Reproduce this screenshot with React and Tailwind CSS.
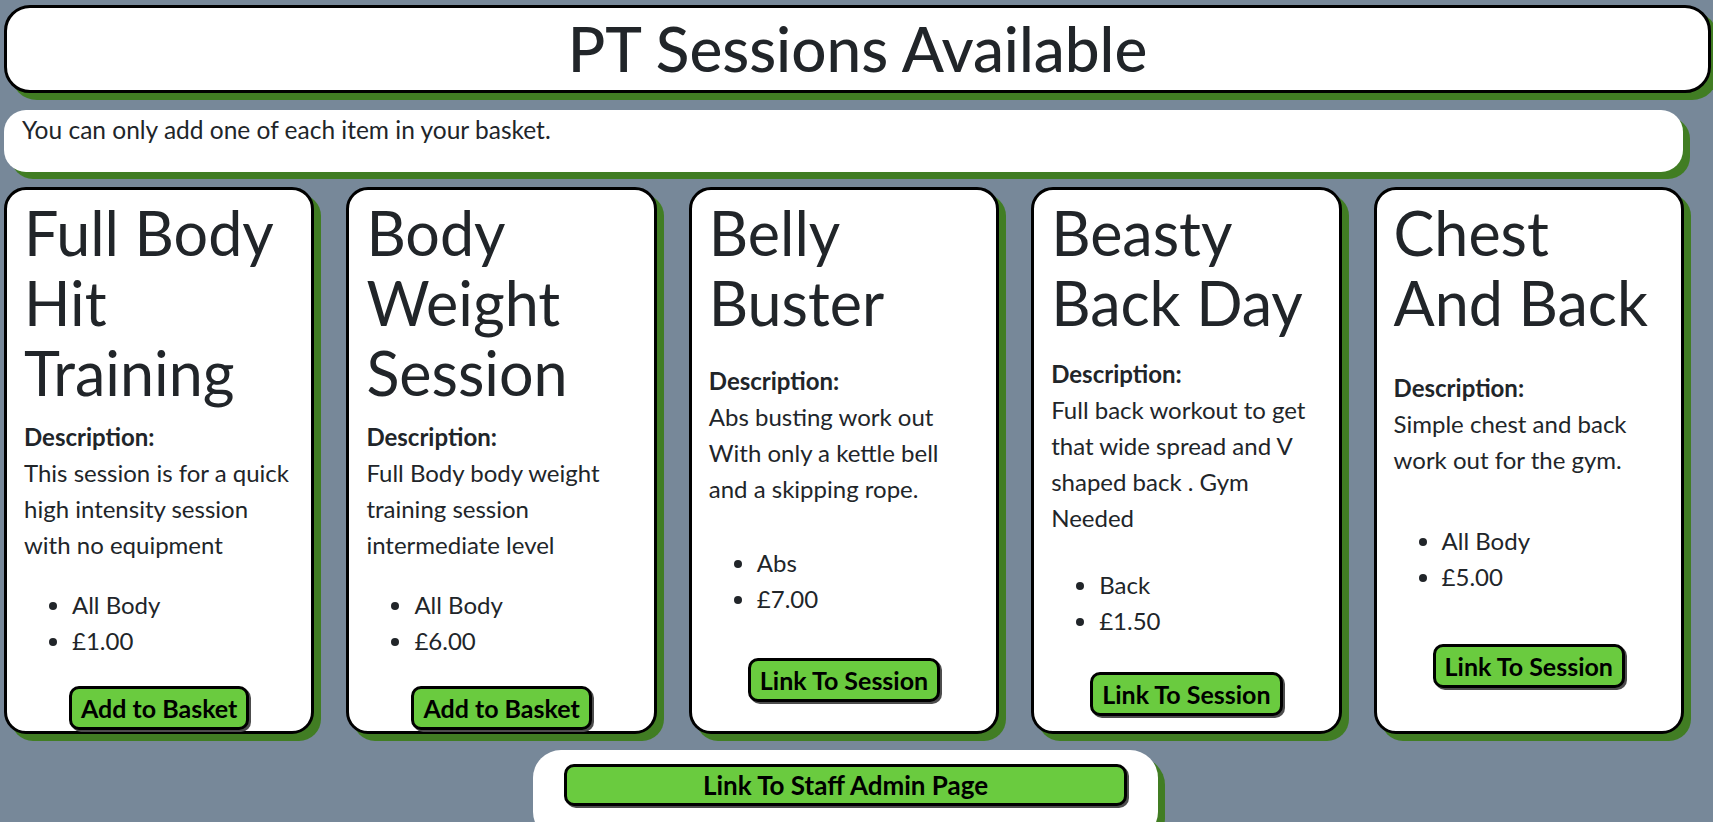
import React from 'react';

const sessions = [
  {
    id: 1,
    title: 'Full Body Hit Training',
    description: ['This session is for a quick high intensity session with no equipment'],
    area: 'All Body',
    price: '£1.00',
    action: 'Add to Basket',
  },
  {
    id: 2,
    title: 'Body Weight Session',
    description: ['Full Body body weight training session intermediate level'],
    area: 'All Body',
    price: '£6.00',
    action: 'Add to Basket',
  },
  {
    id: 3,
    title: 'Belly Buster',
    description: ['Abs busting work out', 'With only a kettle bell and a skipping rope.'],
    area: 'Abs',
    price: '£7.00',
    action: 'Link To Session',
  },
  {
    id: 4,
    title: 'Beasty Back Day',
    description: ['Full back workout to get that wide spread and V shaped back . Gym Needed'],
    area: 'Back',
    price: '£1.50',
    action: 'Link To Session',
  },
  {
    id: 5,
    title: 'Chest And Back',
    description: ['Simple chest and back work out for the gym.'],
    area: 'All Body',
    price: '£5.00',
    action: 'Link To Session',
  },
];

const SessionCard = ({ session }) => (
  <div className="flex flex-col rounded-[22px] border-[3px] border-black bg-white pl-[17px] pr-[17px] pt-[8px] pb-[1px] shadow-[7px_7px_0_#417d23]">
    <h2 className="pr-[10px] text-[61px] leading-[70px] font-normal">{session.title}</h2>
    <div className="flex flex-1 flex-col justify-evenly">
      <div className="mt-[11px]">
        <p className="font-bold">Description:</p>
        <p>
          {session.description.map((line, i) => (
            <React.Fragment key={i}>
              {i > 0 && <br />}
              {line}
            </React.Fragment>
          ))}
        </p>
      </div>
      <ul className="mt-[24px] list-disc pl-[48px]">
        <li>{session.area}</li>
        <li>{session.price}</li>
      </ul>
      <div className="mt-[27px] flex justify-center">
        <button className="rounded-[10px] border-[3px] border-black bg-[#6acb3f] px-[9px] py-[1px] text-[25px] font-bold text-black shadow-[2px_2px_0_#4d4d4d]">
          {session.action}
        </button>
      </div>
      {/* spacer kept from the form wrapper */}
      <div />
    </div>
  </div>
);

export default function App() {
  return (
    <div className="min-h-screen overflow-hidden bg-[#778899] pl-[4px] pt-[5px] font-['Lato',sans-serif] text-[24px] leading-[36px] text-[#212529]">
      {/* Heading */}
      <div className="mr-[2px] flex h-[88px] items-center justify-center rounded-[26px] border-[3px] border-black bg-white shadow-[7px_7px_0_#417d23]">
        <h1 className="-mt-[3px] text-[62px] leading-[82px] font-medium">PT Sessions Available</h1>
      </div>

      {/* Basket note */}
      <div className="mt-[17px] h-[62px] w-[1679px] rounded-[22px] bg-white pl-[18px] pt-[2px] text-[24.5px] shadow-[7px_7px_0_#417d23]">
        You can only add one of each item in your basket.
      </div>

      {/* Sessions */}
      <div className="mt-[15px] grid w-[1680px] grid-cols-5 gap-[32px]">
        {sessions.map((s) => (
          <SessionCard key={s.id} session={s} />
        ))}
      </div>

      {/* Staff link */}
      <div className="mt-[16px] flex justify-center pr-[26px]">
        <div className="h-[90px] w-[625px] rounded-[28px] bg-white px-[31px] pt-[14px] shadow-[7px_7px_0_#417d23]">
          <button className="w-full rounded-[10px] border-[3px] border-black bg-[#6acb3f] text-[26px] leading-[36px] font-bold text-black shadow-[2px_2px_0_#4d4d4d]">
            Link To Staff Admin Page
          </button>
        </div>
      </div>
    </div>
  );
}
